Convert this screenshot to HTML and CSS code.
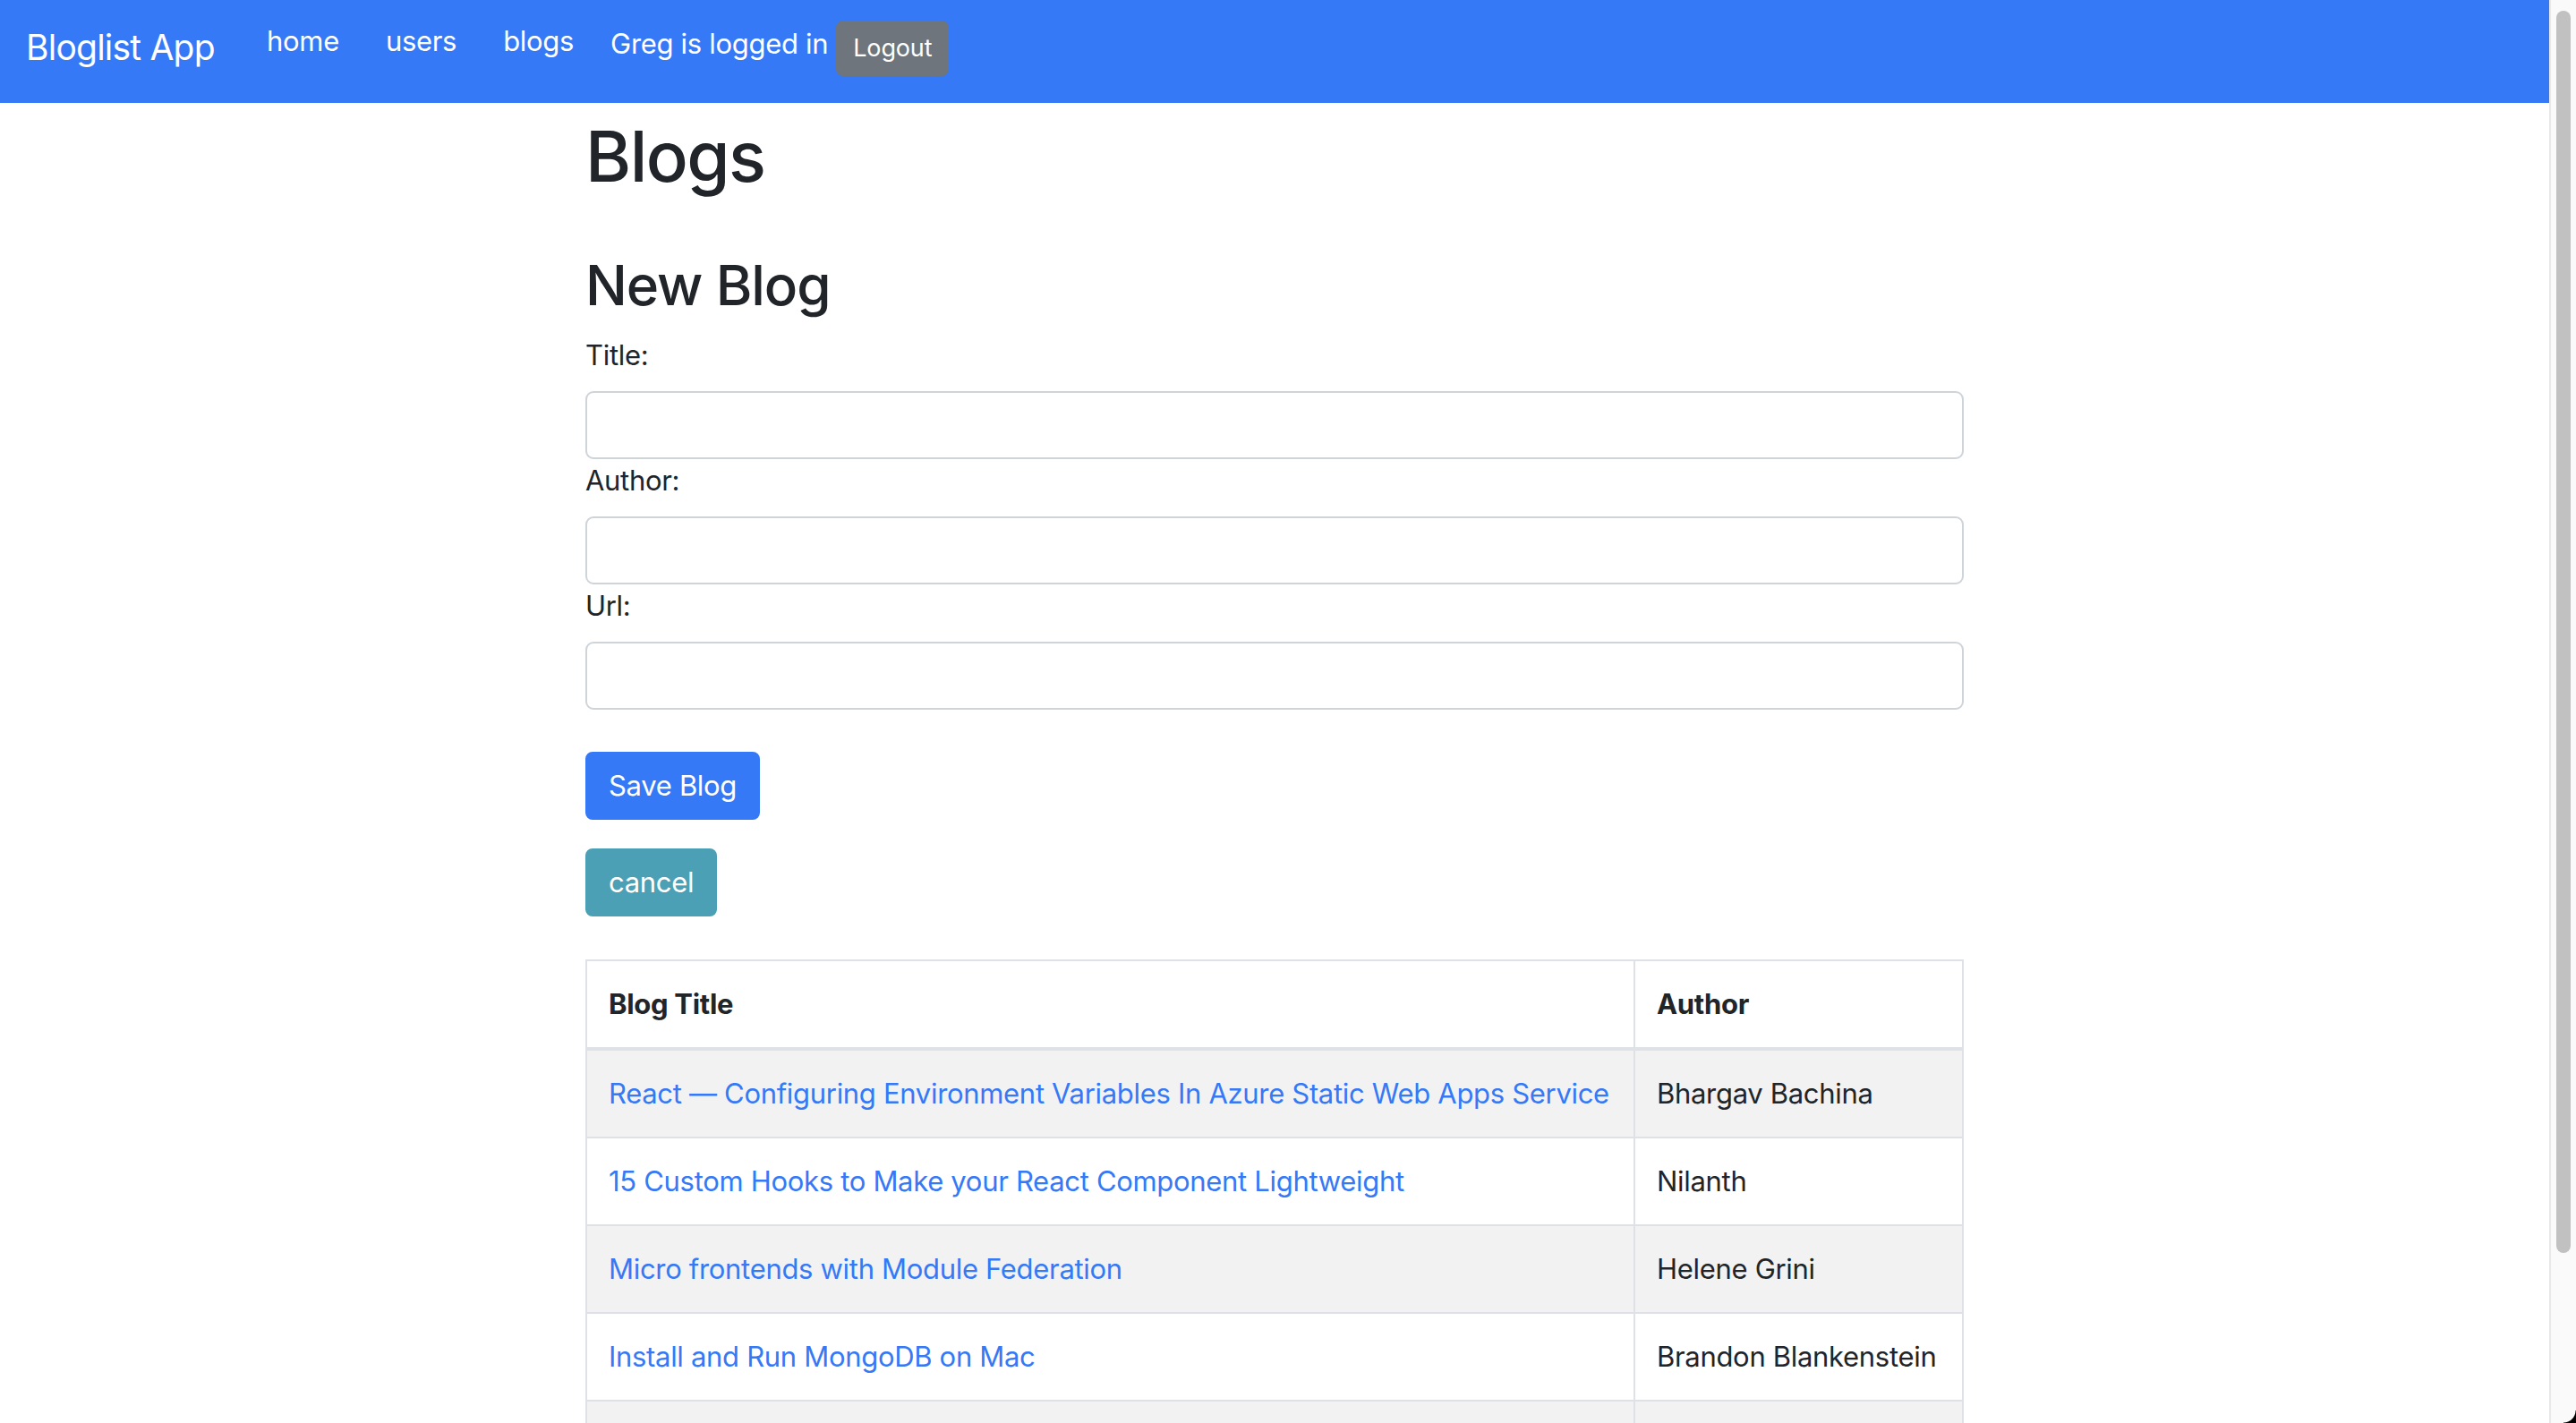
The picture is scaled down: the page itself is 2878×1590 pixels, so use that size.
FILE: index.html
```html
<!DOCTYPE html>
<html lang="en">
<head>
<meta charset="utf-8">
<title>Bloglist App</title>
<link rel="stylesheet" href="styles.css">
</head>
<body>
<div class="page">
  <nav class="navbar">
    <a class="brand" href="#">Bloglist App</a>
    <div class="nav">
      <a class="nav-link" href="#">home</a>
      <a class="nav-link" href="#">users</a>
      <a class="nav-link" href="#">blogs</a>
      <div class="user">
        <span class="user-text">Greg is logged in</span>
        <button class="btn-logout" type="button">Logout</button>
      </div>
    </div>
  </nav>

  <main class="container">
    <h1 class="title">Blogs</h1>
    <h2 class="subtitle">New Blog</h2>
    <form class="blog-form">
      <label class="form-label" for="title">Title:</label>
      <input class="form-control" id="title" type="text">
      <label class="form-label" for="author">Author:</label>
      <input class="form-control" id="author" type="text">
      <label class="form-label" for="url">Url:</label>
      <input class="form-control" id="url" type="text">
      <button class="btn btn-primary" type="button">Save Blog</button>
    </form>
    <button class="btn btn-info" type="button">cancel</button>

    <table class="table">
      <colgroup>
        <col class="col-title">
        <col class="col-author">
      </colgroup>
      <thead>
        <tr><th>Blog Title</th><th>Author</th></tr>
      </thead>
      <tbody>
        <tr><td><a href="#">React — Configuring Environment Variables In Azure Static Web Apps Service</a></td><td>Bhargav Bachina</td></tr>
        <tr><td><a href="#">15 Custom Hooks to Make your React Component Lightweight</a></td><td>Nilanth</td></tr>
        <tr><td><a href="#">Micro frontends with Module Federation</a></td><td>Helene Grini</td></tr>
        <tr><td><a href="#">Install and Run MongoDB on Mac</a></td><td>Brandon Blankenstein</td></tr>
        <tr><td><a href="#">Understanding React Hooks</a></td><td>Greg</td></tr>
        <tr><td><a href="#">Full Stack Open</a></td><td>Greg</td></tr>
      </tbody>
    </table>
  </main>
</div>
<div class="scrollbar">
  <div class="scrollbar-thumb"></div>
  <div class="screen-corner"></div>
</div>
</body>
</html>
```

FILE: styles.css
```css
html, body {
  margin: 0;
  height: 100%;
  overflow: hidden;
}

body {
  display: flex;
  font-family: Inter, "Noto Sans", "Liberation Sans", sans-serif;
  font-size: 31px;
  letter-spacing: -0.01em;
  line-height: 48px;
  color: #212529;
  background: #fff;
}

.page {
  flex: 1;
  min-width: 0;
  height: 100%;
  overflow: hidden;
}

/* Navbar */
.navbar {
  display: flex;
  align-items: flex-start;
  height: 115px;
  padding: 0 32px 0 29px;
  background: #3579f6;
  box-sizing: border-box;
}

.brand {
  flex: 0 0 243px;
  padding-top: 23px;
  font-size: 39px;
  letter-spacing: -0.02em;
  line-height: 60px;
  color: #fff;
  text-decoration: none;
}

.nav {
  display: flex;
  align-items: flex-start;
}

.nav-link {
  padding: 22px 26px 0;
  line-height: 48px;
  color: #fff;
  text-decoration: none;
}

.user {
  display: flex;
  align-items: flex-start;
  margin-left: 15px;
  color: #fff;
}

.user-text {
  padding-top: 25px;
  line-height: 48px;
}

.btn-logout {
  margin: 23px 0 0 9px;
  padding: 8px 17px;
  border: 2px solid #6e757c;
  border-radius: 8px;
  background: #6e757c;
  color: #fff;
  font-family: inherit;
  font-size: 27px;
  letter-spacing: -0.005em;
  line-height: 42px;
}

/* Main */
.container {
  width: 1540px;
  margin: 0 auto;
}

.title {
  margin: 12px 0 0;
  font-size: 78px;
  font-weight: 500;
  letter-spacing: -0.02em;
  line-height: 96px;
}

.subtitle {
  margin: 57px 0 16px;
  font-size: 62px;
  font-weight: 500;
  letter-spacing: -0.018em;
  line-height: 77px;
}

.blog-form {
  margin: 0;
}

.form-label {
  display: block;
  margin-bottom: 16px;
}

.form-control {
  display: block;
  width: 100%;
  height: 76px;
  box-sizing: border-box;
  margin: 0;
  padding: 12px 24px;
  border: 2px solid #cfd4d9;
  border-radius: 9px;
  font: inherit;
  color: #495057;
  background: #fff;
}

.btn {
  display: block;
  padding: 12px 24px;
  border: 2px solid transparent;
  border-radius: 8px;
  font-family: inherit;
  font-size: 31px;
  letter-spacing: -0.01em;
  line-height: 48px;
  color: #fff;
}

.btn-primary {
  margin-top: 47px;
  background: #3579f6;
  border-color: #3579f6;
}

.btn-info {
  margin-top: 32px;
  background: #4ba0b5;
  border-color: #4ba0b5;
}

/* Table */
.table {
  width: 100%;
  margin-top: 48px;
  border-collapse: collapse;
  table-layout: fixed;
}

.col-title {
  width: 1171px;
}

.table th,
.table td {
  padding: 24px;
  border: 2px solid #dee2e6;
  text-align: left;
  vertical-align: top;
  white-space: nowrap;
}

.table th {
  font-weight: 700;
}

.table thead th {
  border-bottom-width: 4px;
}

.table tbody tr:nth-child(odd) {
  background: #f2f2f2;
}

.table a {
  color: #3579f6;
  text-decoration: none;
}

/* Scrollbar */
.scrollbar {
  display: flex;
  flex-direction: column;
  flex: 0 0 30px;
  height: 100%;
  box-sizing: border-box;
  padding-top: 12px;
  background: #fafafa;
  border-left: 2px solid #e8e8e8;
}

.scrollbar-thumb {
  height: 1388px;
  margin: 0 6px;
  border-radius: 8px;
  background: #c1c1c1;
}

.screen-corner {
  align-self: flex-end;
  width: 14px;
  height: 14px;
  margin-top: auto;
  background: radial-gradient(circle at 0 0, transparent 13px, #000 14px);
}
```
